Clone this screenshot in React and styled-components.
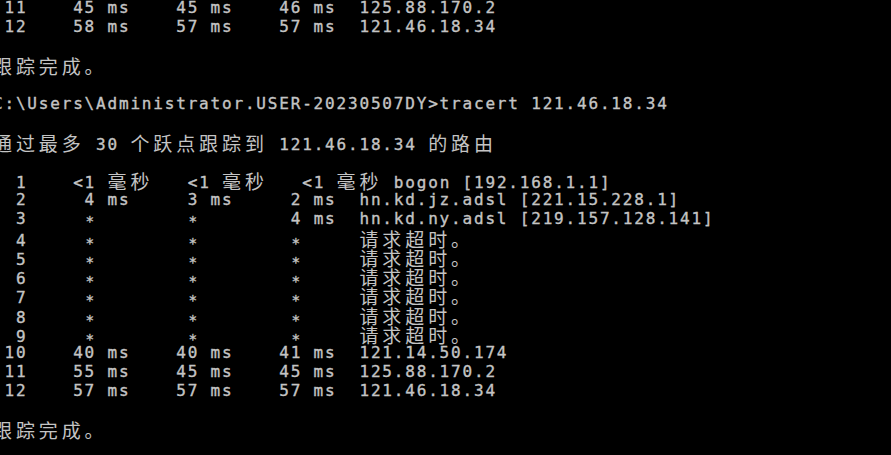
import React from "react";
import styled, { createGlobalStyle } from "styled-components";

const CELL = 11.45;
const ROW = 19.17;

const GlobalStyle = createGlobalStyle`
  html, body {
    margin: 0;
    padding: 0;
    background: #000;
  }
`;

const Screen = styled.div`
  width: 891px;
  height: 455px;
  overflow: hidden;
  background: #000;
`;

const Output = styled.div`
  margin: -2px 0 0 -7px;
  font-family: "DejaVu Sans Mono", "Liberation Mono", monospace;
  font-size: 16px;
  letter-spacing: ${CELL - 16 * 0.602}px;
  line-height: ${ROW}px;
  color: #c4c4c4;
  -webkit-text-stroke: 0.35px #c4c4c4;
  white-space: pre;
`;

const Line = styled.div`
  height: ${ROW}px;
`;

const Wide = styled.span`
  font-family: "Noto Sans CJK SC", "Noto Sans CJK JP", sans-serif;
  font-size: 19px;
  letter-spacing: ${CELL * 2 - 19}px;
  -webkit-text-stroke: 0;
  display: inline-block;
  transform: translateY(1px);
`;

const Star = styled.span`
  display: inline-block;
  transform: translateY(3px) scale(0.9);
`;

const lines = [
  " 11    45 ms    45 ms    46 ms  125.88.170.2",
  " 12    58 ms    57 ms    57 ms  121.46.18.34",
  "",
  "跟踪完成。",
  "",
  "C:\\Users\\Administrator.USER-20230507DY>tracert 121.46.18.34",
  "",
  "通过最多 30 个跃点跟踪到 121.46.18.34 的路由",
  "",
  "  1    <1 毫秒   <1 毫秒   <1 毫秒 bogon [192.168.1.1]",
  "  2     4 ms     3 ms     2 ms  hn.kd.jz.adsl [221.15.228.1]",
  "  3     *        *        4 ms  hn.kd.ny.adsl [219.157.128.141]",
  "  4     *        *        *     请求超时。",
  "  5     *        *        *     请求超时。",
  "  6     *        *        *     请求超时。",
  "  7     *        *        *     请求超时。",
  "  8     *        *        *     请求超时。",
  "  9     *        *        *     请求超时。",
  " 10    40 ms    40 ms    41 ms  121.14.50.174",
  " 11    55 ms    45 ms    45 ms  125.88.170.2",
  " 12    57 ms    57 ms    57 ms  121.46.18.34",
  "",
  "跟踪完成。",
];

// split a console line into plain, wide (CJK) and asterisk runs
function tokens(text) {
  return text.split(/([\u3000-\u9fff\uff00-\uffef]+|\*)/).filter(Boolean);
}

function ConsoleLine({ text }) {
  return (
    <Line>
      {tokens(text).map((t, i) => {
        if (t === "*") return <Star key={i}>*</Star>;
        if (/[\u3000-\u9fff\uff00-\uffef]/.test(t)) return <Wide key={i}>{t}</Wide>;
        return <span key={i}>{t}</span>;
      })}
    </Line>
  );
}

function App() {
  return (
    <Screen>
      <GlobalStyle />
      <Output>
        {lines.map((l, i) => (
          <ConsoleLine key={i} text={l} />
        ))}
      </Output>
    </Screen>
  );
}

export default App;
